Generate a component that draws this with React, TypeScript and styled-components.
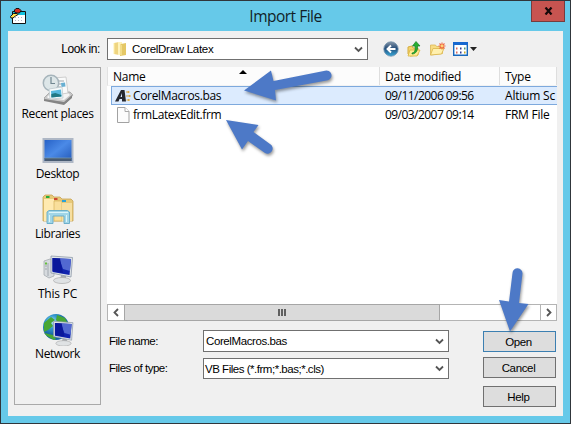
import React from "react";
import styled, { createGlobalStyle } from "styled-components";

const Global = createGlobalStyle`
  * { box-sizing: border-box; }
  body { margin: 0; overflow: hidden; }
  svg { display: block; flex: none; }
`;

const segoe = `"Open Sans", "Noto Sans", sans-serif`;
const classic = `"Liberation Sans", Arial, sans-serif`;

const Window = styled.div`
  position: relative;
  width: 571px;
  height: 424px;
  border: 1px solid #30363b;
  background: #66c9e9;
  display: flex;
  flex-direction: column;
  padding: 0 7px 7px;
  color: #000;
`;
const TitleBar = styled.header`
  height: 30px;
  display: grid;
  grid-template-columns: 60px 1fr 60px;
  align-items: center;
  flex: none;
`;
const AppIcon = styled.div`padding-left: 2px;`;
const Title = styled.h1`
  margin: 0;
  text-align: center;
  font: 400 15.5px ${segoe};
  letter-spacing: -0.5px;
  color: #111f28;
`;
const CloseButton = styled.button`
  justify-self: end;
  align-self: start;
  margin-right: -2px;
  width: 34px;
  height: 21px;
  padding: 0;
  border: 1px solid #763c3e;
  border-top: 0;
  background: #c75450;
  display: grid;
  place-items: center;
`;
const Body = styled.main`
  flex: 1;
  background: #f0f0f0;
  display: flex;
  flex-direction: column;
  padding-left: 6px;
`;
const LookBar = styled.div`
  height: 36px;
  display: flex;
  align-items: center;
`;
const LookLabel = styled.label`
  width: 93px;
  padding-right: 7px;
  text-align: right;
  font: 12px ${classic};
  letter-spacing: -0.4px;
`;
const Combo = styled.div<{ $w: number; $h?: number; $pad: number; $track: number; $gap?: number }>`
  width: ${p => p.$w}px;
  height: ${p => p.$h ?? 22}px;
  background: #fff;
  border: 1px solid #707070;
  display: flex;
  align-items: center;
  gap: ${p => p.$gap ?? 0}px;
  padding: 0 4px 0 ${p => p.$pad}px;
  font: 11.5px ${classic};
  letter-spacing: ${p => p.$track}px;
  white-space: nowrap;
  > span { flex: 1; }
`;
const Tools = styled.nav`
  display: flex;
  align-items: center;
  gap: 7px;
  padding-left: 15px;
`;
const Columns = styled.div`display: flex; gap: 6px;`;
const Places = styled.aside`
  width: 87px;
  height: 338px;
  border: 1px solid #a9a9a9;
  padding-top: 6px;
`;
const Place = styled.div`
  height: 60px;
  display: flex;
  flex-direction: column;
  align-items: center;
  font: 12px/16px ${segoe};
  white-space: nowrap;
`;
const PlaceLabel = styled.span<{ $track: number }>`
  letter-spacing: ${p => p.$track}px;
`;
const Right = styled.section`width: 450px;`;
const FileList = styled.div`
  height: 237px;
  background: #fff;
  font: 12px/17px ${segoe};
  letter-spacing: -0.25px;
`;
const Header = styled.div`
  display: grid;
  grid-template-columns: 272px 120px 57px;
  white-space: nowrap;
  position: relative;
  height: 19px;
  background: #fcfcfc;
  border-bottom: 1px solid #f2f2f2;
  border-left: 1px solid #e2e2e2;
`;
const HeadCell = styled.span`
  padding: 1px 0 0 5px;
  border-right: 1px solid #dedede;
  &:last-child { border: 0; }
`;
const SortMark = styled.i`
  position: absolute;
  left: 131px;
  top: 3px;
  border: 4px solid transparent;
  border-top: 0;
  border-bottom-color: #000;
`;
const Row = styled.div<{ $selected?: boolean }>`
  display: grid;
  grid-template-columns: 268px 120px 57px;
  align-items: center;
  white-space: nowrap;
  height: 19px;
  margin-left: 4px;
  border: 1px solid ${p => (p.$selected ? "#7da9dd" : "transparent")};
  border-right: 0;
  background: ${p => (p.$selected ? "#dcebfe" : "#fff")};
`;
const NameCell = styled.span<{ $track: number }>`
  display: flex;
  align-items: center;
  gap: 2px;
  padding-left: 3px;
  letter-spacing: ${p => p.$track}px;
`;
const Cell = styled.span<{ $track?: number }>`
  padding-left: 5px;
  letter-spacing: ${p => p.$track ?? -0.25}px;
`;
const ScrollBar = styled.div`
  height: 17px;
  display: flex;
  background: #fff;
  border: 1px solid #b4b4b4;
`;
const ScrollButton = styled.div`
  width: 16px;
  display: grid;
  place-items: center;
  &:last-child { margin-left: auto; border-left: 1px solid #b4b4b4; }
`;
const Thumb = styled.div`
  width: 316px;
  margin: -1px 0;
  border: 1px solid #a6a6a6;
  background: #dadada;
  display: flex;
  justify-content: center;
  align-items: center;
  gap: 1px;
  > i { width: 2px; height: 7px; background: #606060; }
`;
const Footer = styled.div`
  display: flex;
  justify-content: space-between;
  padding: 9px 1px 0 2px;
`;
const Fields = styled.div`display: flex; flex-direction: column; gap: 6px;`;
const Field = styled.div`
  display: flex;
  align-items: center;
  font: 11.5px ${classic};
  letter-spacing: -0.48px;
  > label { width: 94px; padding-bottom: 1px; }
`;
const Buttons = styled.div`display: flex; flex-direction: column; padding-top: 1px;`;
const PushButton = styled.button<{ $primary?: boolean; $gap?: number }>`
  width: 73px;
  height: 21px;
  margin-bottom: ${p => p.$gap ?? 0}px;
  padding: 0 2px 0 0;
  background: #ddd;
  border: 1px solid ${p => (p.$primary ? "#3c7fb1" : "#707070")};
  font: 11.5px ${classic};
  letter-spacing: -0.35px;
  color: #000;
`;
const Annotations = styled.svg`
  position: absolute;
  left: -1px;
  top: -1px;
  pointer-events: none;
  filter: drop-shadow(1px 2px 1.5px rgba(0, 0, 0, 0.4));
`;

const Chevron = ({ d = "M1 2.500 L4.500 6 L8 2.500" }: { d?: string }) => (
  <svg width="9" height="9" viewBox="0 0 9 9"><path d={d} fill="none" stroke="#555" strokeWidth="1.800" /></svg>
);

const ImportIcon = () => (
  <svg width="17" height="17" viewBox="0 0 17 17">
    <path d="M2.500 3.500h13v12h-13z" fill="#fff" stroke="#111" />
    <path d="M3 4h12v3H3z" fill="#12c3df" />
    <path d="M5 9.500h1m2 0h1m2 0h1M5 12.500h1m2 0h1m2 0h1" stroke="#aab5c8" />
    <path d="M4.500 2L6 .5h3l2 2-1.500 2.500H7L4.500 4z" fill="#d92c20" stroke="#111" />
    <path d="M.5 8.500l3-3H7l1 1-2.500 1.500L3 10H1z" fill="#ffe14d" stroke="#111" />
  </svg>
);
const FolderSmall = () => (
  <svg width="14" height="16" viewBox="0 0 14 16">
    <path d="M1 2l5-1v13l-5-1z" fill="#efd581" /><path d="M5 1h4v13H5z" fill="#fff3bb" />
    <path d="M8 3l5-1v12l-6 1V4z" fill="#e5c866" /><path d="M8 4v10M1 2v11" stroke="#fff0ac" />
  </svg>
);
const BackIcon = () => (
  <svg width="16" height="16" viewBox="0 0 16 16">
    <defs><linearGradient id="back" x2="0" y2="1"><stop stopColor="#8796a6" /><stop offset=".45" stopColor="#264e7b" /><stop offset="1" stopColor="#36a8d8" /></linearGradient></defs>
    <circle cx="8" cy="8" r="7.200" fill="url(#back)" stroke="#6e8fab" strokeWidth=".8" />
    <path d="M12.500 8H4.500M8 4.500L4.500 8 8 11.500" stroke="#fff" strokeWidth="1.900" fill="none" />
  </svg>
);
const UpIcon = () => (
  <svg width="16" height="16" viewBox="0 0 16 16">
    <path d="M2 6l4-1 1 2h5v7l-8 1-2-2z" fill="#f4d36d" stroke="#d5ad3e" />
    <path d="M4 9h10l-3 6H2z" fill="#ffeb90" stroke="#d9b544" strokeWidth=".8" />
    <path d="M6 12c3-.5 3.500-3 3-7H6.500L10 .5 14 5h-2.500c.5 5-2 8-5.500 8z" fill="#27ae31" stroke="#188025" strokeWidth=".7" />
  </svg>
);
const NewFolderIcon = () => (
  <svg width="17" height="16" viewBox="0 0 17 16">
    <path d="M1.500 4h5l1 1.500h6v7l-12 1.500z" fill="#f7dc82" stroke="#dcb855" strokeWidth=".8" />
    <path d="M4 7.500h11L12.500 13l-11 1z" fill="#fff0ae" stroke="#dab54a" strokeWidth=".8" />
    <path d="M13 1.500v7M9.500 5h7M10.500 2.500l5 5m0-5l-5 5" stroke="#ef6540" strokeWidth="1.100" /><circle cx="13" cy="5" r="1.400" fill="#ffd576" />
  </svg>
);
const ViewIcon = () => (
  <svg width="25" height="16" viewBox="0 0 25 16">
    <path d="M.7 1.700h13.600v12.600H.7z" fill="#fff" stroke="#1768bd" strokeWidth="1.400" /><path d="M0 1h15v3H0z" fill="#1768d0" />
    <path d="M3 7.500h1.500m0 4H3" stroke="#dc6c5c" strokeWidth="1.800" /><path d="M7 7.500h1.500m0 4H7" stroke="#303b93" strokeWidth="1.800" /><path d="M11 7.500h1.500" stroke="#4c9871" strokeWidth="1.800" /><path d="M11 11.500h1.500" stroke="#c5a823" strokeWidth="1.800" />
    <path d="M17 6h7l-3.500 4z" fill="#222" />
  </svg>
);
const RecentIcon = () => (
  <svg width="32" height="32" viewBox="0 0 32 32">
    <path d="M2 24l6-6h20l3 3-7 8-20-3z" fill="#c9c9c9" stroke="#999" strokeWidth=".7" />
    <path d="M5 23l4-4h17l2 2-6 5-16-2z" fill="#f5f5f5" /><path d="M2 25l20 3 8-7v3l-8 7-20-4z" fill="#858585" />
    <path d="M12 4l12-1 2 16-12 2z" fill="#f9fafa" stroke="#c4c4c4" strokeWidth=".8" /><path d="M15 7h7m-6 3h3m-3 3h3" stroke="#9ca6ad" /><path d="M19 9l4-.5.5 4-4 .5z" fill="#67afd2" />
    <circle cx="9" cy="9" r="7.700" fill="#dde6e8" stroke="#a6b4bb" strokeWidth="1.500" /><path d="M9 3v6.500h4" fill="none" stroke="#718791" strokeWidth="1.200" />
    <path d="M7 15l13-2 1 11-13 1z" fill="#f7fbfc" stroke="#bdc9ce" strokeWidth=".8" /><path d="M9 17l10-1.500.7 7L9.500 23.500z" fill="#58b9df" /><path d="M9.300 20l4-1 6 2v1.500l-10 1z" fill="#217985" />
  </svg>
);
const DesktopIcon = () => (
  <svg width="32" height="32" viewBox="0 0 32 32">
    <defs><linearGradient id="desk" x2="1" y2="1"><stop stopColor="#235ec4" /><stop offset=".48" stopColor="#4b8ae7" /><stop offset="1" stopColor="#2055b5" /></linearGradient></defs>
    <path d="M1.500 5h29v23h-29z" fill="url(#desk)" stroke="#aeb7c5" strokeWidth="2" /><path d="M2.500 24h27v3h-27z" fill="#485b72" /><path d="M3 24h26" stroke="#809eae" strokeWidth=".7" />
  </svg>
);
const LibraryIcon = () => (
  <svg width="32" height="32" viewBox="0 0 32 32">
    <path d="M1 3l2-2h7l2 2h6l2 2h9l2 2v20H1z" fill="#e7c979" stroke="#c8a354" strokeWidth=".8" />
    <path d="M2 5h10v22H2z" fill="#ffeab0" /><path d="M12 7h8v20h-8z" fill="#f9df9b" stroke="#d2ac51" strokeWidth=".6" /><path d="M20 9h10v18H20z" fill="#f7dfa0" />
    <path d="M4 3h3.500" stroke="#25ac3b" strokeWidth="2" /><path d="M12 5h3.500" stroke="#ce4731" strokeWidth="2" /><path d="M20 7h4" stroke="#2aa2d7" strokeWidth="2" />
    <path d="M5 29.500V18l2-1.500h18.500l2 1.500v11.500H22V22H11v7.500z" fill="#a1d6e7" stroke="#62a9c7" strokeWidth=".9" /><path d="M7 18.500h19M7.500 21v7m17-7v7" stroke="#dbf5fa" />
  </svg>
);
const Monitor = () => (
  <>
    <path d="M19 21l5 1v4h-6z" fill="#a8adb3" /><ellipse cx="20" cy="26.500" rx="8.500" ry="3" fill="#dfe2e4" stroke="#aaa" strokeWidth=".7" />
    <path d="M9 2l21.500 1.500L29 23 9 19z" fill="#dfe5e9" stroke="#909ba8" strokeWidth=".8" />
    <path d="M10.500 4L29 5l-1.500 16-17-3z" fill="#1023ae" /><path d="M17 4.500L29 5l-1 12-7-2z" fill="#5269d1" /><path d="M18 4.500L21 19l-10.500-2V4z" fill="#0a189b" />
  </>
);
const ComputerIcon = () => (
  <svg width="32" height="32" viewBox="0 0 32 32">
    <path d="M2 7l6-2 4 2v15l-5 2-5-3z" fill="#d6dade" stroke="#a5abb0" strokeWidth=".8" /><path d="M6 9v13M3 12h2m-2 3h2" stroke="#969da3" strokeWidth=".8" /><path d="M3 9.500h2" stroke="#64bd3c" strokeWidth="1.800" /><Monitor />
  </svg>
);
const NetworkIcon = () => (
  <svg width="32" height="32" viewBox="0 0 32 32">
    <defs><radialGradient id="globe" cx=".35" cy=".3"><stop stopColor="#b5e5fa" /><stop offset=".5" stopColor="#3399ce" /><stop offset="1" stopColor="#1765a3" /></radialGradient></defs>
    <circle cx="14" cy="13" r="13" fill="url(#globe)" /><path d="M2 9l7-6 4 3-4 3 2 3-5 4-4 2zM15 1l8 3 3 6-7 1-5-5zM2 19l9 2 3 4-2 1-7-4z" fill="#48a735" />
    <g transform="translate(3.500 5.500) scale(.9)"><Monitor /></g>
  </svg>
);
const MacroIcon = () => (
  <svg width="16" height="16" viewBox="0 0 16 16">
    <path d="M0 13.500h3.500l1-2.500H7v2.500h4L9.500 2H6zM5.500 9L7 5v4z" fill="#24272e" fillRule="evenodd" />
    <path d="M11 4h2.500M11 8h3.500M11.500 12H14" stroke="#d9a745" /><circle cx="13.500" cy="4" r="1" fill="#e1a83d" /><circle cx="14.700" cy="8" r="1" fill="#e1a83d" /><circle cx="13.800" cy="12" r="1" fill="#e1a83d" />
  </svg>
);
const PageIcon = () => (
  <svg width="16" height="16" viewBox="0 0 16 16"><path d="M2.500.5H10l4 4v11H2.500z" fill="#fcfcfc" stroke="#a2a2a2" /><path d="M10 .5v4h4" fill="#fff" stroke="#aaa" /></svg>
);

const places = [
  { label: "Recent places", icon: <RecentIcon />, track: -0.35 },
  { label: "Desktop", icon: <DesktopIcon />, track: -0.4 },
  { label: "Libraries", icon: <LibraryIcon />, track: -0.4 },
  { label: "This PC", icon: <ComputerIcon />, track: -0.2 },
  { label: "Network", icon: <NetworkIcon />, track: -0.4 },
];

export default function App() {
  return (
    <>
      <Global />
      <Window>
        <TitleBar>
          <AppIcon><ImportIcon /></AppIcon>
          <Title>Import File</Title>
          <CloseButton aria-label="Close"><svg width="9" height="8" viewBox="0 0 9 8"><path d="M1.500.5l6 7m0-7l-6 7" stroke="#16090a" strokeWidth="2.200" /></svg></CloseButton>
        </TitleBar>
        <Body>
          <LookBar>
            <LookLabel>Look in:</LookLabel>
            <Combo $w={261} $pad={5} $track={-0.28} $gap={5}><FolderSmall /><span>CorelDraw Latex</span><Chevron /></Combo>
            <Tools><BackIcon /><UpIcon /><NewFolderIcon /><ViewIcon /></Tools>
          </LookBar>
          <Columns>
            <Places>
              {places.map(p => <Place key={p.label}>{p.icon}<PlaceLabel $track={p.track}>{p.label}</PlaceLabel></Place>)}
            </Places>
            <Right>
              <FileList>
                <Header><HeadCell>Name</HeadCell><HeadCell>Date modified</HeadCell><HeadCell>Type</HeadCell><SortMark /></Header>
                <Row $selected><NameCell $track={-0.35}><MacroIcon />CorelMacros.bas</NameCell><Cell $track={-0.55}>09/11/2006 09:56</Cell><Cell $track={-0.2}>Altium Sc</Cell></Row>
                <Row><NameCell $track={-0.42}><PageIcon />frmLatexEdit.frm</NameCell><Cell $track={-0.55}>09/03/2007 09:14</Cell><Cell>FRM File</Cell></Row>
              </FileList>
              <ScrollBar>
                <ScrollButton><Chevron d="M6 1L2.500 4.500 6 8" /></ScrollButton>
                <Thumb><i /><i /><i /></Thumb>
                <ScrollButton><Chevron d="M3 1l3.500 3.500L3 8" /></ScrollButton>
              </ScrollBar>
              <Footer>
                <Fields>
                  <Field><label>File name:</label><Combo $w={246} $pad={2} $track={-0.4}><span>CorelMacros.bas</span><Chevron /></Combo></Field>
                  <Field><label>Files of type:</label><Combo $w={246} $h={21} $pad={1} $track={-0.48}><span>VB Files (*.frm;*.bas;*.cls)</span><Chevron /></Combo></Field>
                </Fields>
                <Buttons><PushButton $primary $gap={5}>Open</PushButton><PushButton $gap={8}>Cancel</PushButton><PushButton>Help</PushButton></Buttons>
              </Footer>
            </Right>
          </Columns>
        </Body>
        <Annotations width="571" height="424" viewBox="0 0 571 424" fill="#4d79c7">
          <path d="M244 90.500L271 70.500L273.500 81L325 70.700A5 5 0 0 1 328 80.300L275 90L276 100.500Z" />
          <path d="M226 120L258.500 125L253.500 132L270 144A5 5 0 0 1 265 153L248 141L242 149.500Z" />
          <path d="M510 331.500L499 300L509 301.500L512.500 273A5 5 0 0 1 522.500 273.500L519 303L528.500 304Z" />
        </Annotations>
      </Window>
    </>
  );
}
